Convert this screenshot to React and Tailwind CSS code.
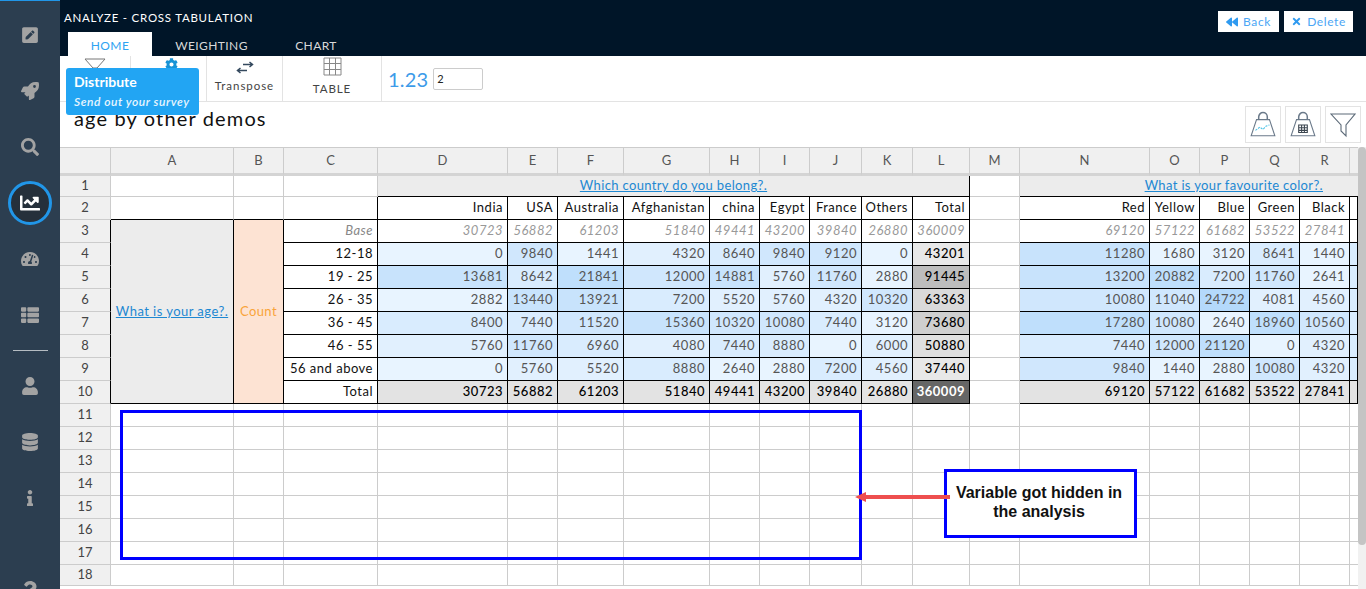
import {
  FaPenSquare,
  FaRocket,
  FaSearch,
  FaChartLine,
  FaTachometerAlt,
  FaThList,
  FaUser,
  FaDatabase,
  FaInfo,
  FaQuestion,
  FaBackward,
  FaTimes,
  FaCog,
} from "react-icons/fa";

const font = "font-['Lato','Open_Sans',sans-serif]";

const columns = ["A", "B", "C", "D", "E", "F", "G", "H", "I", "J", "K", "L", "M", "N", "O", "P", "Q", "R"];

const ageRows = [
  ["12-18", [0, 9840, 1441, 4320, 8640, 9840, 9120, 0], 43201, [11280, 1680, 3120, 8641, 1440]],
  ["19 - 25", [13681, 8642, 21841, 12000, 14881, 5760, 11760, 2880], 91445, [13200, 20882, 7200, 11760, 2641]],
  ["26 - 35", [2882, 13440, 13921, 7200, 5520, 5760, 4320, 10320], 63363, [10080, 11040, 24722, 4081, 4560]],
  ["36 - 45", [8400, 7440, 11520, 15360, 10320, 10080, 7440, 3120], 73680, [17280, 10080, 2640, 18960, 10560]],
  ["46 - 55", [5760, 11760, 6960, 4080, 7440, 8880, 0, 6000], 50880, [7440, 12000, 21120, 0, 4320]],
  ["56 and above", [0, 5760, 5520, 8880, 2640, 2880, 7200, 4560], 37440, [9840, 1440, 2880, 10080, 4320]],
];

function heat(v) {
  if (v < 3500) return "bg-[#e8f4ff]";
  if (v < 6500) return "bg-[#e1f0fe]";
  if (v < 9000) return "bg-[#d9ecfe]";
  if (v < 12500) return "bg-[#d0e7fd]";
  if (v < 18000) return "bg-[#c8e3fc]";
  if (v < 22000) return "bg-[#bfdffc]";
  return "bg-[#b4d9fb]";
}

function totalBg(v) {
  if (v > 90000) return "bg-[#bdbdbd]";
  if (v > 70000) return "bg-[#cfcfcf]";
  if (v > 60000) return "bg-[#dadada]";
  if (v > 45000) return "bg-[#e0e0e0]";
  return "bg-[#e8e8e8]";
}

function Cell({ className = "", children }) {
  return (
    <div className={`flex items-center justify-end overflow-hidden whitespace-nowrap border-r border-b pr-1 text-[13px] tracking-[0.5px] ${className}`}>
      {children}
    </div>
  );
}

function Blank({ className = "" }) {
  return <div className={`border-r border-b border-[#ccc] ${className}`} />;
}

function RowHead({ n }) {
  const inBlock = n >= 3 && n <= 10;
  return (
    <div className={`flex items-center justify-center border-r border-b border-[#ccc] bg-[#f0f0f0] text-[13px] text-[#444] ${inBlock ? "border-r-black" : ""}`}>
      {n}
    </div>
  );
}

function ColHead({ label }) {
  return (
    <div className="flex items-center justify-center border-r border-b-[3px] border-r-[#ccc] border-b-[#d4d4d4] bg-[#f0f0f0] text-[13px] text-[#555]">
      {label}
    </div>
  );
}

function SideIcon({ icon: Icon, size = 18 }) {
  return (
    <div className="flex h-[56px] shrink-0 items-center justify-center text-[#a3a3a3]">
      <Icon size={size} />
    </div>
  );
}

function Sidebar() {
  return (
    <div className="flex h-[589px] w-[60px] shrink-0 flex-col items-center overflow-hidden border-t border-[#2196e8] bg-[#2c3e50] pt-[6px]">
      <SideIcon icon={FaPenSquare} />
      <SideIcon icon={FaRocket} />
      <SideIcon icon={FaSearch} />
      <div className="my-[6px] flex h-[44px] w-[44px] shrink-0 items-center justify-center rounded-full border-[3px] border-[#2196e8] bg-[#25303b] text-white">
        <FaChartLine size={20} />
      </div>
      <SideIcon icon={FaTachometerAlt} />
      <SideIcon icon={FaThList} />
      <div className="my-[7px] h-px w-[35px] shrink-0 bg-[#b5bcc2]" />
      <SideIcon icon={FaUser} />
      <SideIcon icon={FaDatabase} />
      <SideIcon icon={FaInfo} size={16} />
      <div className="mt-[36px] shrink-0">
        <SideIcon icon={FaQuestion} />
      </div>
    </div>
  );
}

function Header() {
  return (
    <div className="flex h-[56px] justify-between bg-[#001528]">
      <div className="flex flex-col justify-between">
        <div className="pl-[4px] pt-[9px] text-[11.5px] tracking-[0.75px] text-white">ANALYZE - CROSS TABULATION</div>
        <div className="ml-[8px] flex h-[24px] text-[12px] tracking-[0.4px]">
          <div className="flex w-[84px] items-center justify-center bg-white pt-[3px] text-[#2ea3f2]">HOME</div>
          <div className="flex w-[119px] items-center justify-center pt-[3px] text-[#d9d9d9]">WEIGHTING</div>
          <div className="flex w-[90px] items-center justify-center pt-[3px] text-[#d9d9d9]">CHART</div>
        </div>
      </div>
      <div className="mr-[13px] mt-[11px] flex h-[21px] gap-[5px] text-[12px] tracking-[0.6px] text-[#4ba6f5]">
        <div className="flex w-[61px] items-center justify-center gap-[5px] bg-white">
          <FaBackward size={12} className="text-[#2f9af0]" />
          Back
        </div>
        <div className="flex w-[69px] items-center justify-center gap-[5px] bg-white">
          <FaTimes size={11} className="text-[#2f9af0]" />
          Delete
        </div>
      </div>
    </div>
  );
}

function Toolbar() {
  return (
    <div className="flex h-[46px] items-stretch border-b border-[#e3e3e3] bg-white">
      <div className="flex w-[71px] justify-center border-r border-[#e3e3e3] pt-[2px]">
        <svg width="22" height="12" viewBox="0 0 22 12" fill="none" stroke="#777">
          <path d="M1 1h20l-8 9h-4z" />
        </svg>
      </div>
      <div className="flex w-[76px] justify-center border-r border-[#e3e3e3] pl-[6px] pt-[2px] text-[#1793d6]">
        <FaCog size={13} />
      </div>
      <div className="flex w-[76px] flex-col items-center border-r border-[#e3e3e3] pt-[5px] text-[11.5px] tracking-[0.95px] text-[#444]">
        <svg width="18" height="14" viewBox="0 0 18 14" fill="none" stroke="#34495e" strokeWidth="1.5">
          <path d="M7 3.500h10M13.500 1l3 2.500-3 2.500M11 9.500H1M4.500 7l-3 2.500 3 2.500" />
        </svg>
        <span className="mt-[2px]">Transpose</span>
      </div>
      <div className="flex w-[99px] flex-col items-center border-r border-[#e3e3e3] text-[11.5px] tracking-[0.9px] text-[#444]">
        <svg width="19" height="19" viewBox="0 0 19 19" fill="none" stroke="#888" className="mt-[1px]">
          <path d="M1 1h17v17H1zM1 6.500h17M1 12.500h17M6.500 1v17M12.500 1v17" />
        </svg>
        <span className="mt-[4px]">TABLE</span>
      </div>
      <div className="flex items-center gap-[5px] pl-[6px]">
        <span className="text-[20px] tracking-[0.2px] text-[#3d9be9]">1.23</span>
        <input
          readOnly
          value="2"
          className="h-[22px] w-[50px] rounded-[2px] border border-[#ccc] px-[3px] text-[11px] text-[#222] outline-none"
        />
      </div>
    </div>
  );
}

function WeightIcon({ children }) {
  return (
    <svg width="28" height="28" viewBox="0 0 26 26" fill="none" stroke="#6b7a8a" strokeWidth="1">
      <path d="M9 8V5.500a4 4 0 0 1 8 0V8" strokeWidth="1.4" />
      <path d="M7 8h12l5 15H2z" />
      {children}
    </svg>
  );
}

function TitleRow() {
  return (
    <div className="flex h-[45px] justify-between bg-white">
      <div className="pl-[14px] pt-[3px] text-[20px] leading-[26px] tracking-[1.15px] text-[#111]">age by other demos</div>
      <div className="mr-[5px] mt-[4px] flex gap-[4px]">
        <div className="flex h-[37px] w-[36px] items-center justify-center border border-[#e3e3e3]">
          <WeightIcon>
            <path d="M6 18l4-3 3 2 3-3 3-1" stroke="#4cc3e6" strokeDasharray="2 1" />
          </WeightIcon>
        </div>
        <div className="flex h-[37px] w-[36px] items-center justify-center border border-[#e3e3e3]">
          <WeightIcon>
            <path d="M9 13h8v7H9zM9 15.500h8M9 18h8M11.700 13v7M14.300 13v7" stroke="#3c4650" />
          </WeightIcon>
        </div>
        <div className="flex h-[37px] w-[36px] items-center justify-center border border-[#e3e3e3]">
          <svg width="26" height="26" viewBox="0 0 26 26" fill="none" stroke="#5c6a78" strokeWidth="1.1">
            <path d="M1 2h24l-9 11v11l-5-5v-6z" />
          </svg>
        </div>
      </div>
    </div>
  );
}

function Sheet() {
  const k = "border-black";
  const grayRight = "border-b-black";
  return (
    <div className="grid grid-cols-[51px_123px_50px_94px_130px_50px_66px_86px_50px_50px_52px_51px_57px_50px_130px_50px_50px_50px_50px_8px] grid-rows-[28px_21px_repeat(16,23px)] overflow-hidden border-t border-[#ccc] text-[#222]">
      {/* column heads */}
      <div className="border-r border-b-[3px] border-r-[#ccc] border-b-[#d4d4d4] bg-[#f0f0f0]" />
      {columns.map((c) => (
        <ColHead key={c} label={c} />
      ))}
      <div className="border-b-[3px] border-b-[#d4d4d4] bg-[#f0f0f0]" />

      {/* row 1 */}
      <RowHead n={1} />
      <Blank />
      <Blank />
      <Blank />
      <div className={`col-span-9 flex items-center justify-center border-r border-b bg-[#ececec] text-[13px] tracking-[0.35px] text-[#1e88d2] underline ${k}`}>
        Which country do you belong?.
      </div>
      <Blank />
      <div className={`col-span-6 flex items-center justify-end border-b bg-[#ececec] pr-[35px] text-[13px] tracking-[0.35px] text-[#1e88d2] underline ${k}`}>
        What is your favourite color?.
      </div>

      {/* row 2 */}
      <RowHead n={2} />
      <Blank className={grayRight} />
      <Blank className={grayRight} />
      <Blank className={k} />
      {["India", "USA", "Australia", "Afghanistan", "china", "Egypt", "France", "Others", "Total"].map((h) => (
        <Cell key={h} className={`${k} text-[#111]`}>{h}</Cell>
      ))}
      <Blank />
      {["Red", "Yellow", "Blue", "Green", "Black"].map((h) => (
        <Cell key={h} className={`${k} text-[#111]`}>{h}</Cell>
      ))}
      <Blank className={k} />

      {/* row 3, merged cells run down to row 10 */}
      <RowHead n={3} />
      <div className={`row-span-8 flex items-center justify-center border-r border-b bg-[#ececec] text-[13px] tracking-[0.45px] text-[#1e88d2] underline ${k}`}>
        What is your age?.
      </div>
      <div className={`row-span-8 flex items-center justify-center border-r border-b bg-[#fde3d3] text-[13px] tracking-[0.4px] text-[#f9a33a] ${k}`}>
        Count
      </div>
      <Cell className={`${k} italic text-[#888]`}>Base</Cell>
      {[30723, 56882, 61203, 51840, 49441, 43200, 39840, 26880, 360009].map((v) => (
        <Cell key={v} className={`${k} italic text-[#999]`}>{v}</Cell>
      ))}
      <Blank />
      {[69120, 57122, 61682, 53522, 27841].map((v) => (
        <Cell key={v} className={`${k} italic text-[#999]`}>{v}</Cell>
      ))}
      <Blank className={k} />

      {/* rows 4 to 9 */}
      {ageRows.map(([label, left, total, right], i) => (
        <div key={label} className="contents">
          <RowHead n={i + 4} />
          <Cell className={`${k} text-[#111]`}>{label}</Cell>
          {left.map((v, j) => (
            <Cell key={j} className={`${k} text-[#555] ${heat(v)}`}>{v}</Cell>
          ))}
          <Cell className={`${k} font-medium text-black ${totalBg(total)}`}>{total}</Cell>
          <Blank />
          {right.map((v, j) => (
            <Cell key={j} className={`${k} text-[#555] ${heat(j === 0 ? v * 1.2 : v)}`}>{v}</Cell>
          ))}
          <Blank className={`${k} bg-[#d9ecfe]`} />
        </div>
      ))}

      {/* row 10 */}
      <RowHead n={10} />
      <Cell className={`${k} text-[#111]`}>Total</Cell>
      {[30723, 56882, 61203, 51840, 49441, 43200, 39840, 26880].map((v) => (
        <Cell key={v} className={`${k} bg-[#e3e3e3] font-medium text-black`}>{v}</Cell>
      ))}
      <Cell className={`${k} bg-[#666] font-bold text-white`}>360009</Cell>
      <Blank />
      {[69120, 57122, 61682, 53522, 27841].map((v) => (
        <Cell key={v} className={`${k} bg-[#e3e3e3] font-medium text-black`}>{v}</Cell>
      ))}
      <Blank className={`${k} bg-[#e3e3e3]`} />

      {/* empty rows */}
      {[11, 12, 13, 14, 15, 16, 17, 18].map((n) => (
        <div key={n} className="contents">
          <RowHead n={n} />
          {columns.map((c) => (
            <Blank key={c} />
          ))}
          <div className="border-b border-[#ccc]" />
        </div>
      ))}
    </div>
  );
}

export default function App() {
  return (
    <div className={`relative flex h-[589px] w-[1366px] overflow-hidden bg-white ${font}`}>
      <Sidebar />
      <div className="w-[1306px]">
        <Header />
        <Toolbar />
        <TitleRow />
        <Sheet />
      </div>

      {/* scrollbar */}
      <div className="absolute right-0 top-[147px] h-[442px] w-[8px] bg-[#f1f1f1]">
        <div className="h-[398px] w-[8px] rounded-[4px] bg-[#c4c4c4]" />
      </div>

      {/* tooltip over the toolbar */}
      <div className="absolute left-[66px] top-[68px] h-[47px] w-[133px] rounded-[3px] bg-[#22a5f3] px-[8px] pt-[5px] text-white">
        <div className="text-[14px] font-bold leading-[17px]">Distribute</div>
        <div className="mt-[5px] text-[12px] font-semibold italic leading-[14px] tracking-[0.55px] text-[#e8f5fe]">Send out your survey</div>
      </div>

      {/* annotation */}
      <div className="absolute left-[120px] top-[410px] h-[150px] w-[742px] border-[3px] border-[#0000ff]" />
      <div className="absolute left-[944px] top-[469px] flex h-[69px] w-[193px] items-center justify-center border-[3px] border-[#0000ff] bg-white pb-[4px] pl-[4px] pr-[7px] text-center font-['Liberation_Sans',sans-serif] text-[16px] font-bold leading-[19px] text-[#111]">
        Variable got hidden in the analysis
      </div>
      <svg width="96" height="12" viewBox="0 0 96 12" className="absolute left-[855px] top-[491px]">
        <path d="M0 6l11-5v3h84v4H11v3z" fill="#ee4f4f" />
      </svg>
    </div>
  );
}
